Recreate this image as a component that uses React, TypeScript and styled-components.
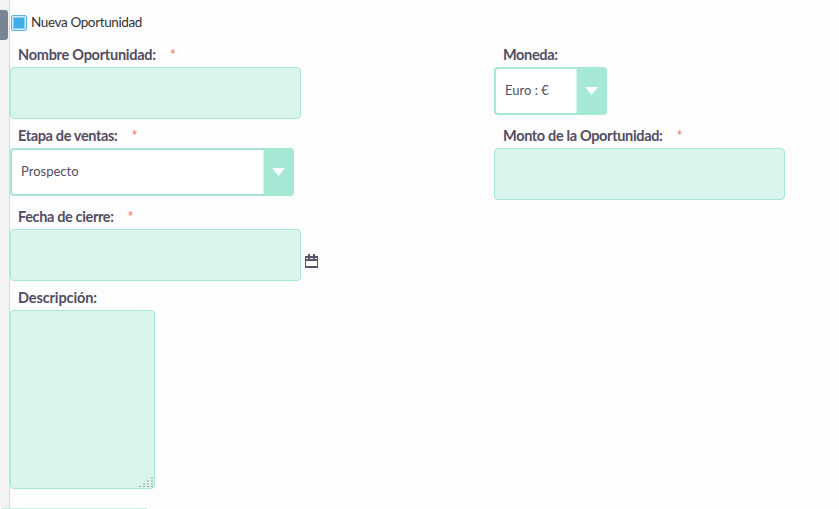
import React from 'react';
import styled, { createGlobalStyle } from 'styled-components';

const GlobalStyle = createGlobalStyle`
  *, *::before { box-sizing: border-box; }
  body { margin: 0; background: #fdfdfd; overflow: hidden; font-family: Lato, sans-serif; color: #534d64; }
`;

const Page = styled.div`
  display: grid;
  grid-template-columns: 10px 1fr;
  grid-template-rows: 508px 1px;
  height: 509px;
`;

const Rail = styled.aside`
  padding-top: 10px;
  background: #f3f3f3;
  border-right: 1px solid #d9d9d9;
`;

const RailHandle = styled.div`
  width: 8px;
  height: 30px;
  border-radius: 0 3px 3px 0;
  background: #778591;
`;

const Form = styled.main`
  padding-top: 14px;
`;

const Toggle = styled.label`
  display: flex;
  align-items: center;
  height: 17px;
  margin-bottom: 14px;
  padding-left: 1px;
  gap: 4px;
  font-size: 13.5px;
  letter-spacing: -0.38px;
  line-height: 17px;
  color: #333;
`;

const ToggleText = styled.span`
  height: 18px;
`;

const CheckMark = styled.span`
  flex: none;
  width: 16px;
  height: 16px;
  margin-top: 1px;
  border: 1px solid #58b4ea;
  border-radius: 2px;
  padding: 1px;
  background: #d6ebf7;
  &::before {
    content: '';
    display: block;
    height: 12px;
    border: 1px solid #8fcbef;
    background: #3daee9;
  }
`;

const Row = styled.div`
  display: grid;
  grid-template-columns: 484px 1fr;
  height: 81px;
`;

const Caption = styled.div<{ $indent: number; $tracking: number }>`
  display: flex;
  height: 22px;
  padding-left: ${(p) => p.$indent}px;
  font-size: 14.5px;
  font-weight: 700;
  letter-spacing: ${(p) => p.$tracking}px;
  line-height: 19px;
`;

const Required = styled.span`
  margin-left: 14px;
  font-weight: 400;
  color: #f0746a;
`;

const FieldLine = styled.div`
  display: flex;
  align-items: center;
`;

const TextBox = styled.div`
  width: 291px;
  height: 52px;
  border: 1px solid #a5e8d6;
  border-radius: 4px;
  background: #d9f5ed;
`;

const TextArea = styled(TextBox)`
  display: flex;
  align-items: flex-end;
  justify-content: flex-end;
  width: 145px;
  height: 179px;
`;

const SelectBox = styled.div<{ $width: number }>`
  display: flex;
  width: ${(p) => p.$width}px;
  height: 48px;
  border: 2px solid #a5e8d6;
  border-radius: 4px;
  background: #fff;
`;

const SelectValue = styled.span`
  flex: 1;
  padding-left: 9px;
  font-size: 13px;
  line-height: 43px;
`;

const SelectArrow = styled.span`
  display: flex;
  align-items: center;
  justify-content: center;
  width: 29px;
  border-left: 1px solid #d8f5ec;
  background: #a5e8d6;
`;

const CalendarSvg = styled.svg`
  margin: 12px 0 0 4px;
`;

const NextControl = styled.div`
  grid-column: 1 / -1;
  width: 146px;
  margin-left: 1px;
  background: #c5efe3;
`;

interface LabelProps {
  text: string;
  required?: boolean;
  indent?: number;
  tracking?: number;
}

function Label({ text, required = false, indent = 8, tracking = -0.36 }: LabelProps) {
  return (
    <Caption $indent={indent} $tracking={tracking}>
      {text}
      {required && <Required>*</Required>}
    </Caption>
  );
}

function Select({ value, width }: { value: string; width: number }) {
  return (
    <SelectBox $width={width}>
      <SelectValue>{value}</SelectValue>
      <SelectArrow>
        <svg width="13" height="8" viewBox="0 0 13 8"><path d="M0 0H13L6.5 8Z" fill="#fff" /></svg>
      </SelectArrow>
    </SelectBox>
  );
}

function CalendarIcon() {
  return (
    <CalendarSvg width="13" height="14" viewBox="0 0 13 14" shapeRendering="crispEdges">
      <path fill="#5a546b" fillRule="evenodd" d="M3 0H5V2H8V0H10V2H13V14H0V2H3ZM1 4V5H12V4H10V5H8V4H5V5H3V4ZM1 7V12H12V7Z" />
    </CalendarSvg>
  );
}

function ResizeGrip() {
  const steps = [0, 1, 2, 3];
  return (
    <svg width="17" height="12" viewBox="0 0 17 12" shapeRendering="crispEdges">
      {steps.map((col) =>
        steps
          .filter((row) => row + col >= 3)
          .map((row) => (
            <rect key={`${col}-${row}`} x={2 + col * 4} y={1 + row * 3} width="2" height={row === 3 ? 1 : 2} fill={row === 3 ? '#9caaa5' : '#b8cbc4'} />
          )),
      )}
    </svg>
  );
}

export default function App() {
  return (
    <>
      <GlobalStyle />
      <Page>
        <Rail><RailHandle /></Rail>
        <Form>
          <Toggle><CheckMark /><ToggleText>Nueva Oportunidad</ToggleText></Toggle>
          <Row>
            <div><Label text="Nombre Oportunidad:" tracking={-0.26} required /><TextBox /></div>
            <div><Label text="Moneda:" indent={9} /><Select value="Euro : €" width={113} /></div>
          </Row>
          <Row>
            <div><Label text="Etapa de ventas:" required /><Select value="Prospecto" width={284} /></div>
            <div><Label text="Monto de la Oportunidad:" indent={9} tracking={-0.34} required /><TextBox /></div>
          </Row>
          <Row>
            <div>
              <Label text="Fecha de cierre:" required />
              <FieldLine><TextBox /><CalendarIcon /></FieldLine>
            </div>
          </Row>
          <Label text="Descripción:" tracking={-0.12} />
          <TextArea><ResizeGrip /></TextArea>
        </Form>
        <NextControl />
      </Page>
    </>
  );
}
